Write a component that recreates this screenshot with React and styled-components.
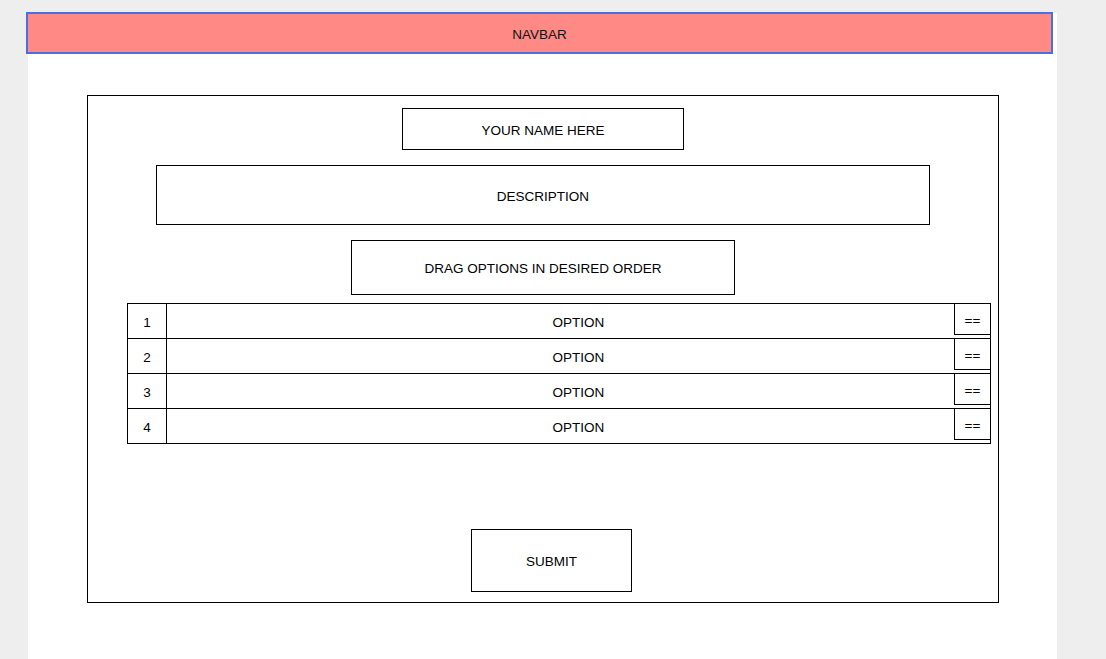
import React from "react";
import styled, { createGlobalStyle } from "styled-components";

const Global = createGlobalStyle`
  html, body { margin: 0; padding: 0; background: #eeeeee; }
  body { font-family: "Liberation Sans", Arial, sans-serif; color: #000; }
  * { box-sizing: border-box; }
`;

const Screen = styled.div`
  padding: 13px 0 0 28px;
  min-height: 659px;
  display: flex;
`;

const Page = styled.div`
  width: 1029px;
  min-height: 646px;
  background: #ffffff;
  display: flex;
  flex-direction: column;
`;

const Navbar = styled.div`
  margin: -1px 0 0 -2px;
  width: 1027px;
  height: 42px;
  padding-top: 2px;
  background: #ff8a85;
  border: 2px solid #4b6ee0;
  display: flex;
  align-items: center;
  justify-content: center;
  font-size: 13.5px;
  color: #111;
`;

const Card = styled.div`
  margin: 41px 0 0 59px;
  width: 912px;
  height: 508px;
  border: 1px solid #000;
  display: flex;
  flex-direction: column;
  align-items: center;
  padding-top: 12px;
`;

const Field = styled.div`
  width: ${(p) => p.$w}px;
  height: ${(p) => p.$h}px;
  margin-top: ${(p) => p.$mt || 0}px;
  padding-top: 2px;
  border: 1px solid #000;
  display: flex;
  align-items: center;
  justify-content: center;
  font-size: 13.5px;
`;

const Table = styled.div`
  margin-top: 8px;
  align-self: flex-start;
  margin-left: 39px;
  width: 864px;
  border: 1px solid #000;
  display: flex;
  flex-direction: column;
`;

const Row = styled.div`
  position: relative;
  height: 35px;
  display: flex;
  border-bottom: 1px solid #000;
  &:last-child { height: 34px; border-bottom: none; }
`;

const Num = styled.div`
  width: 39px;
  padding-top: 2px;
  border-right: 1px solid #000;
  display: flex;
  align-items: center;
  justify-content: center;
  font-size: 13.5px;
`;

const OptionText = styled.div`
  flex: 1;
  padding-top: 2px;
  display: flex;
  align-items: center;
  justify-content: center;
  font-size: 13.5px;
`;

const Handle = styled.div`
  position: absolute;
  top: -1px;
  right: -1px;
  width: 37px;
  height: 32px;
  padding-top: 2px;
  border: 1px solid #000;
  background: #fff;
  display: flex;
  align-items: center;
  justify-content: center;
  font-size: 13.5px;
`;

const Submit = styled.div`
  margin-top: 85px;
  align-self: flex-start;
  margin-left: 383px;
  width: 161px;
  height: 63px;
  padding-top: 2px;
  border: 1px solid #000;
  display: flex;
  align-items: center;
  justify-content: center;
  font-size: 13.5px;
`;

export default function App() {
  const rows = [1, 2, 3, 4];
  return (
    <>
      <Global />
      <Screen>
        <Page>
          <Navbar>NAVBAR</Navbar>
          <Card>
            <Field $w={282} $h={42}>YOUR NAME HERE</Field>
            <Field $w={774} $h={60} $mt={15}>DESCRIPTION</Field>
            <Field $w={384} $h={55} $mt={15}>DRAG OPTIONS IN DESIRED ORDER</Field>
            <Table>
              {rows.map((n) => (
                <Row key={n}>
                  <Num>{n}</Num>
                  <OptionText>OPTION</OptionText>
                  <Handle>==</Handle>
                </Row>
              ))}
            </Table>
            <Submit>SUBMIT</Submit>
          </Card>
        </Page>
      </Screen>
    </>
  );
}
